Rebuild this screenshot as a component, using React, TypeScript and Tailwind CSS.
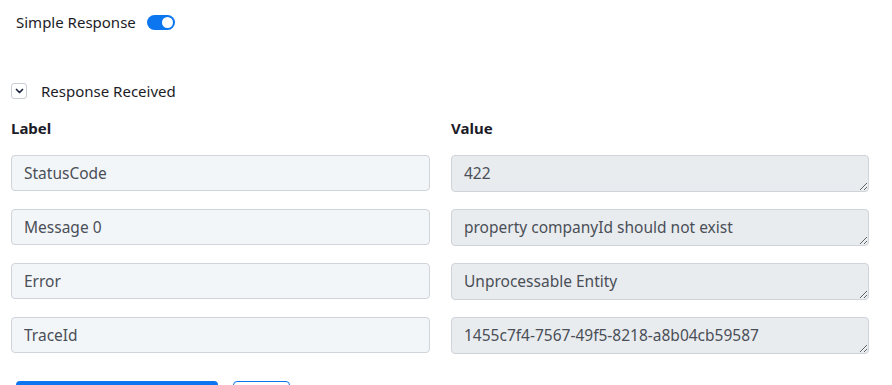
import { useState } from "react";

const rows = [
    { label: "StatusCode", value: "422" },
    { label: "Message 0", value: "property companyId should not exist" },
    { label: "Error", value: "Unprocessable Entity" },
    { label: "TraceId", value: "1455c7f4-7567-49f5-8218-a8b04cb59587" },
];

const Toggle = ({ on, onChange }: { on: boolean; onChange: () => void }) => (
    <button
        onClick={onChange}
        className={`relative w-[28px] h-[15px] rounded-full ${on ? "bg-[#0b76f0]" : "bg-[#c4c9d0]"}`}
    >
        <span className={`absolute top-[2px] w-[11px] h-[11px] rounded-full bg-white ${on ? "left-[15px]" : "left-[2px]"}`} />
    </button>
);

export default function App() {
    const [simple, setSimple] = useState(true);
    const [open, setOpen] = useState(true);

    return (
        <div className="w-[892px] h-[385px] overflow-hidden bg-white text-[#1c1c28]" style={{ fontFamily: '"Noto Sans", "Open Sans", sans-serif' }}>
            <div className="flex items-center gap-[11px] pl-[16px] pt-[11px] h-[22px] box-content">
                <span className="text-[15px]">Simple Response</span>
                <Toggle on={simple} onChange={() => setSimple(!simple)} />
            </div>

            <div className="pl-[11px] pr-[22px] pt-[50px]">
                <div className="flex items-center gap-[14px] h-[16px]">
                    <button onClick={() => setOpen(!open)} className="w-[16px] h-[16px] rounded-[3px] border border-[#c9ced6] flex items-center justify-center">
                        <svg width="9" height="6" viewBox="0 0 9 6" className={open ? "" : "-rotate-90"}>
                            <path d="M1.5 1.5 L4.5 4.5 L7.5 1.5" fill="none" stroke="#1b2540" strokeWidth="1.7" strokeLinecap="round" strokeLinejoin="round" />
                        </svg>
                    </button>
                    <span className="text-[15px]">Response Received</span>
                </div>

                {open && (
                    <div className="grid grid-cols-[419px_418px] gap-x-[21px] mt-[19px]">
                        <div className="text-[15px] font-bold h-[20px] leading-[20px]">Label</div>
                        <div className="text-[15px] font-bold h-[20px] leading-[20px]">Value</div>
                        {rows.map((row, i) => (
                            <div key={i} className="contents">
                                <input
                                    readOnly
                                    value={row.label}
                                    className="mt-[17px] h-[36px] px-[12px] rounded-[4px] border border-[#cfd4da] bg-[#f3f6f9] text-[15.5px] text-[#4a4f57] outline-none"
                                />
                                <textarea
                                    readOnly
                                    value={row.value}
                                    rows={1}
                                    className="mt-[17px] h-[37px] px-[12px] pt-[5px] rounded-[4px] border border-[#cfd4da] bg-[#e9ecef] text-[15.5px] text-[#4a4f57] outline-none leading-[24px]"
                                />
                            </div>
                        ))}
                    </div>
                )}

                <div className="flex gap-[15px] pl-[5px] mt-[27px]">
                    <button aria-label="Submit" className="w-[202px] h-[34px] rounded-[4px] bg-[#0b76f0]" />
                    <button aria-label="Reset" className="w-[57px] h-[34px] rounded-[4px] border border-[#0b76f0]" />
                </div>
            </div>
        </div>
    );
}
